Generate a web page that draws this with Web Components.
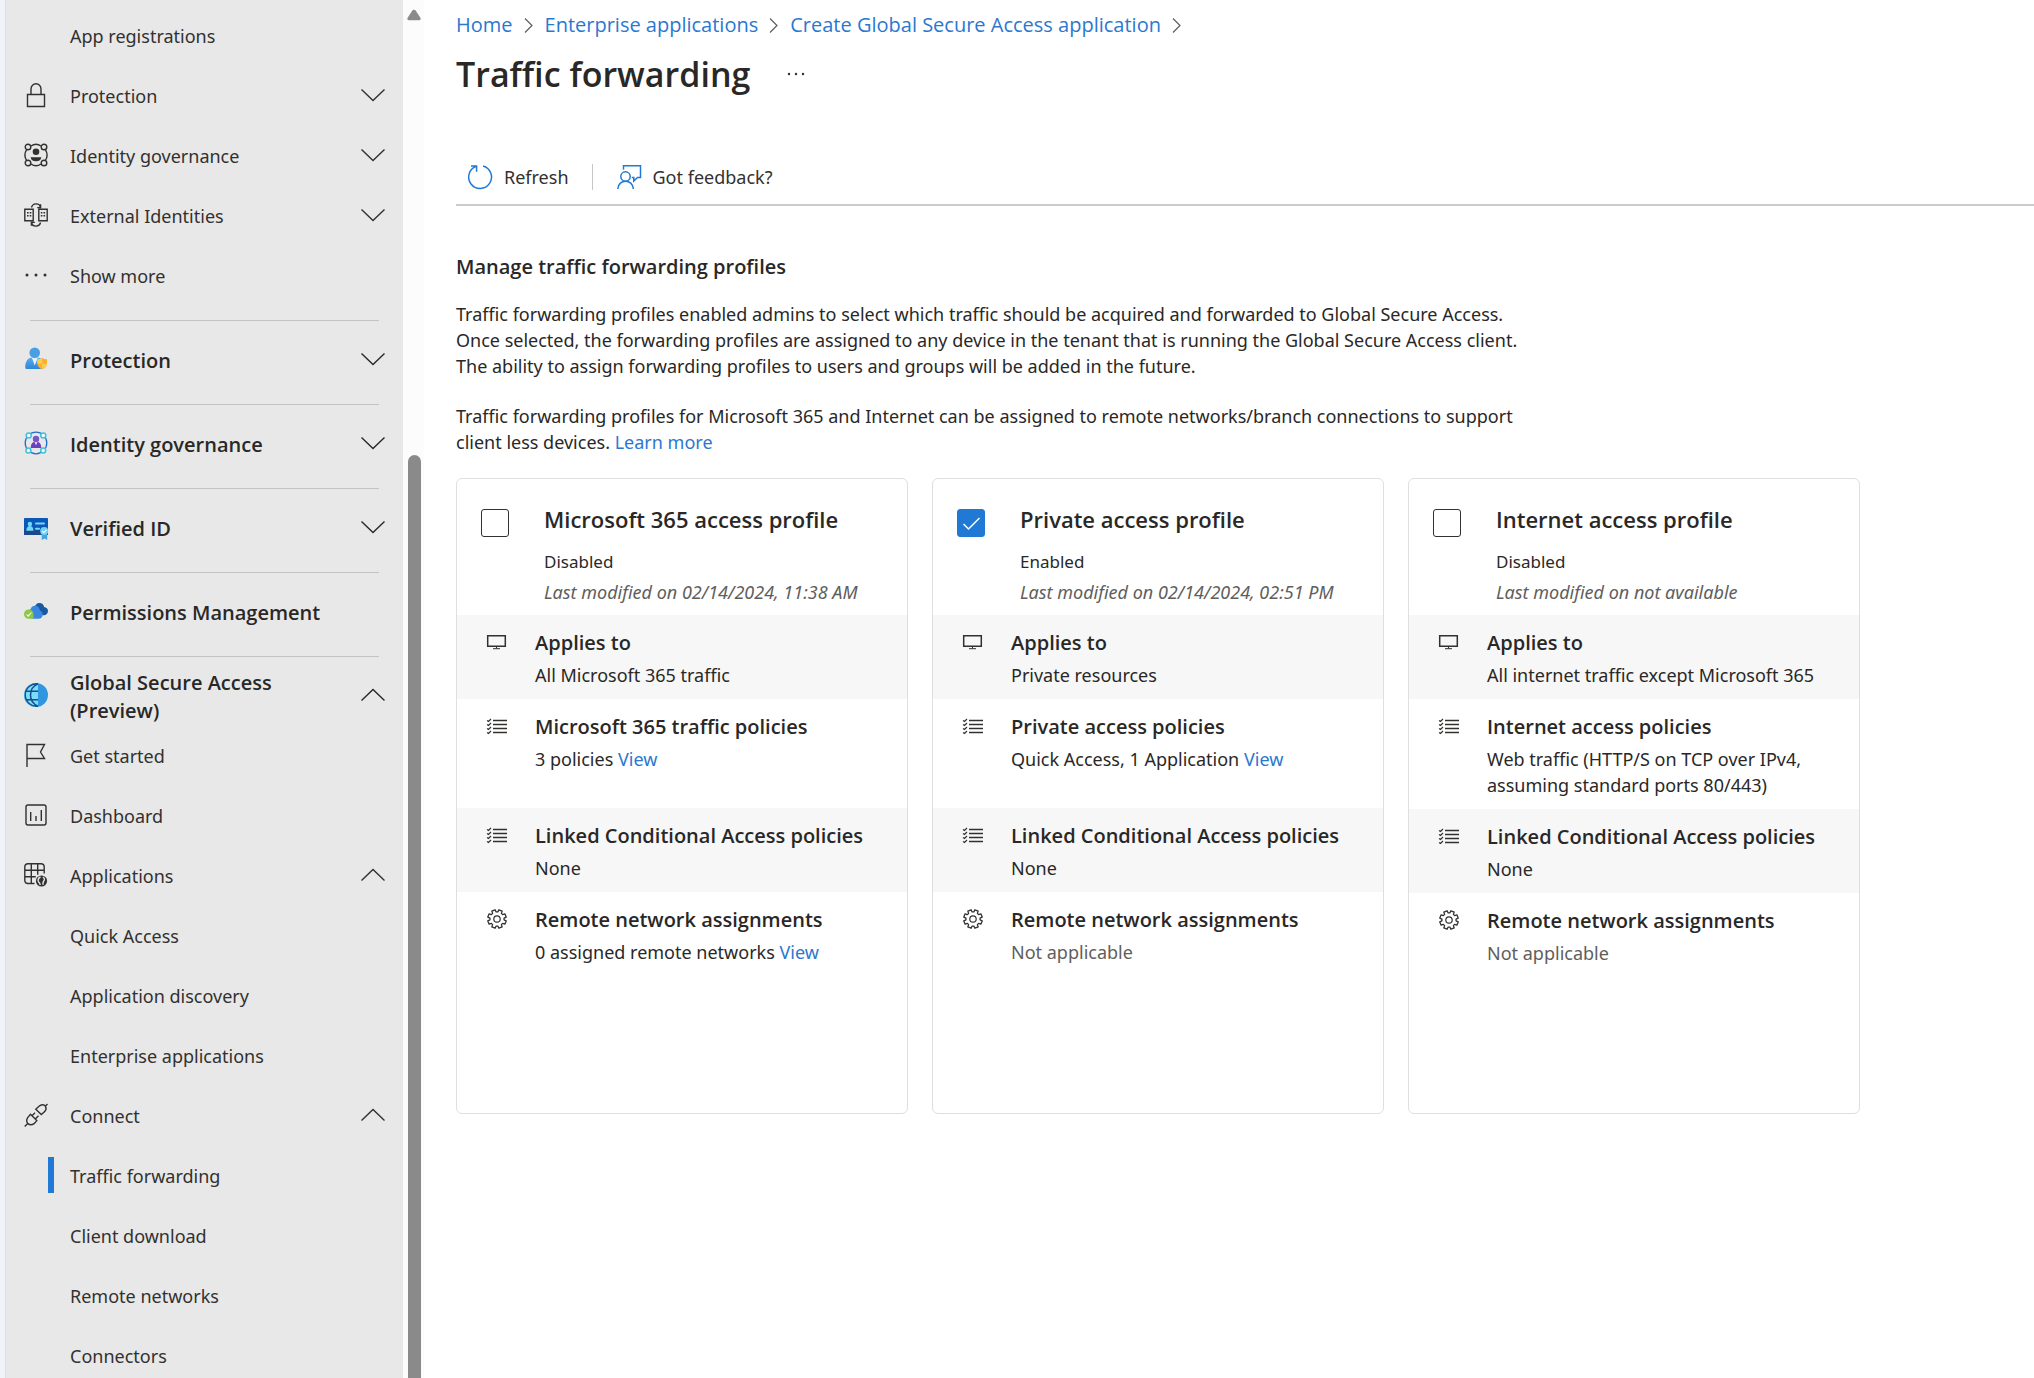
<!DOCTYPE html>
<html lang="en">
<head>
<meta charset="utf-8">
<title>Traffic forwarding</title>
<style>
  body { margin: 0; }
</style>
</head>
<body>
<entra-shell>
  <side-nav slot="nav">
    <nav-item>App registrations</nav-item>
    <nav-item icon="lock" toggle="down">Protection</nav-item>
    <nav-item icon="governance" toggle="down">Identity governance</nav-item>
    <nav-item icon="external" toggle="down">External Identities</nav-item>
    <nav-item icon="more">Show more</nav-item>
    <nav-rule></nav-rule>
    <nav-item strong icon="protection" toggle="down">Protection</nav-item>
    <nav-rule></nav-rule>
    <nav-item strong icon="identity" toggle="down">Identity governance</nav-item>
    <nav-rule></nav-rule>
    <nav-item strong icon="verified" toggle="down">Verified ID</nav-item>
    <nav-rule></nav-rule>
    <nav-item strong icon="permissions">Permissions Management</nav-item>
    <nav-rule></nav-rule>
    <nav-item strong icon="globe" toggle="up">Global Secure Access<br>(Preview)</nav-item>
    <nav-item icon="flag">Get started</nav-item>
    <nav-item icon="dashboard">Dashboard</nav-item>
    <nav-item icon="apps" toggle="up">Applications</nav-item>
    <nav-item>Quick Access</nav-item>
    <nav-item>Application discovery</nav-item>
    <nav-item>Enterprise applications</nav-item>
    <nav-item icon="connect" toggle="up">Connect</nav-item>
    <nav-item current>Traffic forwarding</nav-item>
    <nav-item>Client download</nav-item>
    <nav-item>Remote networks</nav-item>
    <nav-item>Connectors</nav-item>
  </side-nav>

  <page-header heading="Traffic forwarding">
    <crumb-link>Home</crumb-link>
    <crumb-link>Enterprise applications</crumb-link>
    <crumb-link>Create Global Secure Access application</crumb-link>
  </page-header>

  <command-bar>
    <command-button icon="refresh">Refresh</command-button>
    <command-button icon="feedback" divided>Got feedback?</command-button>
  </command-bar>

  <profile-intro></profile-intro>

  <profile-grid>
    <profile-card status="Disabled" modified="Last modified on 02/14/2024, 11:38 AM">
      <span slot="title">Microsoft 365 access profile</span>
      <profile-row icon="monitor" shaded><span slot="title">Applies to</span>All Microsoft 365 traffic</profile-row>
      <profile-row icon="list" tall link="View"><span slot="title">Microsoft 365 traffic policies</span>3 policies</profile-row>
      <profile-row icon="list" shaded><span slot="title">Linked Conditional Access policies</span>None</profile-row>
      <profile-row icon="gear" link="View"><span slot="title">Remote network assignments</span>0 assigned remote networks</profile-row>
    </profile-card>
    <profile-card checked status="Enabled" modified="Last modified on 02/14/2024, 02:51 PM">
      <span slot="title">Private access profile</span>
      <profile-row icon="monitor" shaded><span slot="title">Applies to</span>Private resources</profile-row>
      <profile-row icon="list" tall link="View"><span slot="title">Private access policies</span>Quick Access, 1 Application</profile-row>
      <profile-row icon="list" shaded><span slot="title">Linked Conditional Access policies</span>None</profile-row>
      <profile-row icon="gear" muted><span slot="title">Remote network assignments</span>Not applicable</profile-row>
    </profile-card>
    <profile-card status="Disabled" modified="Last modified on not available">
      <span slot="title">Internet access profile</span>
      <profile-row icon="monitor" shaded><span slot="title">Applies to</span>All internet traffic except Microsoft 365</profile-row>
      <profile-row icon="list" tall><span slot="title">Internet access policies</span>Web traffic (HTTP/S on TCP over IPv4, assuming standard ports 80/443)</profile-row>
      <profile-row icon="list" shaded><span slot="title">Linked Conditional Access policies</span>None</profile-row>
      <profile-row icon="gear" muted><span slot="title">Remote network assignments</span>Not applicable</profile-row>
    </profile-card>
  </profile-grid>
</entra-shell>

<script>
const gearPath = (() => {
  const teeth = 8, points = [];
  for (let i = 0; i < teeth; i++) {
    const a = i * 2 * Math.PI / teeth + Math.PI / 8;
    [[-0.27, 7.1], [-0.19, 9.4], [0.19, 9.4], [0.27, 7.1]].forEach(([d, r]) =>
      points.push((12 + r * Math.sin(a + d)).toFixed(2) + ' ' + (12 - r * Math.cos(a + d)).toFixed(2)));
  }
  return 'M' + points.join('L') + 'Z';
})();

const ICONS = {
  down: '<path d="M.5 6.500 12 17.500 23.500 6.500"/>',
  up: '<path d="M.5 17.500 12 6.500 23.500 17.500"/>',
  crumb: '<path d="M8 5.500 15 12.500 8 19.500" stroke-width="1.200"/>',
  more: '<g fill="currentColor" stroke="none"><circle cx="3" cy="12" r="1.500"/><circle cx="12" cy="12" r="1.500"/><circle cx="21" cy="12" r="1.500"/></g>',
  dots: '<g fill="currentColor" stroke="none"><circle cx="5" cy="12" r="1.200"/><circle cx="12" cy="12" r="1.200"/><circle cx="19" cy="12" r="1.200"/></g>',
  lock: '<path d="M3.500 11.500h17v12h-17zM7 11V6a5 5.200 0 0 1 10 0v5"/>',
  governance: '<circle cx="4" cy="4" r="2.800"/><circle cx="20" cy="4" r="2.800"/><circle cx="4" cy="20" r="2.800"/><circle cx="20" cy="20" r="2.800"/><path d="M7 3q5-3.500 10 0M7 21q5 3.500 10 0M2.500 6.800q-3.200 5.200 0 10.400M21.500 6.800q3.200 5.200 0 10.400"/><circle cx="12" cy="8.700" r="3.300" fill="currentColor" stroke="none"/><path d="M6.700 14.200h10.600q-.3 4-5.300 4t-5.300-4z" fill="currentColor" stroke="none"/>',
  external: '<path d="M.8 6.300h8.400v11.400H.8zM14.800 6.300h8.400v11.400h-8.400zM7.500 4.500C8.500-.2 15.500-.3 16.300 3.800M16.600 1.200v3.400h-3.400M16.500 19.500c-1 4.700-8 4.800-8.800.7M7.400 22.800v-3.400h3.400"/><path d="M3 9h1.600v1.600H3zM5.700 9h1.600v1.600H5.700zM3 12h1.600v1.600H3zM5.700 12h1.600v1.600H5.700zM16.800 9h1.600v1.600h-1.600zM19.500 9h1.600v1.600h-1.600zM16.800 12h1.600v1.600h-1.600zM19.500 12h1.600v1.600h-1.600z" fill="currentColor" stroke="none"/>',
  protection: '<defs><linearGradient id="p" x2="0" y2="1"><stop stop-color="#5aaae9"/><stop offset="1" stop-color="#2f86d9"/></linearGradient></defs><g stroke="none"><path d="M1.300 20.500C1 15 4 10.800 7 10.800h7.500c3 0 5.500 4 5.300 9.700 0 1-.7 1.500-1.500 1.500H3c-1 0-1.700-.5-1.700-1.500z" fill="url(#p)"/><path d="M7.800 10.800h6l-3 7.800z" fill="#e3f1fb"/><circle cx="10.700" cy="5.700" r="5.300" fill="#4a9fe4"/><path d="M18.200 10.700q1.600 1.500 4.800 1.600v4.200c0 3-2.500 4.900-4.800 6.100-2.300-1.200-4.800-3.100-4.800-6.100v-4.200q3.200-.1 4.800-1.600z" fill="#f9ae35"/><path d="M18.200 10.700v6H13.400v-4.400q3.200-.1 4.800-1.600zM18.200 16.700H23c-.2 2.800-2.600 4.700-4.800 5.900z" fill="#fdcc4a"/></g>',
  identity: '<g fill="none"><circle cx="12" cy="12" r="10.800" stroke="#2470cf" stroke-width="1.300"/><g fill="#f4fbfd" stroke="#41bfdb" stroke-width="1.500"><circle cx="4.700" cy="4.600" r="2.500"/><circle cx="19.300" cy="4.600" r="2.500"/><circle cx="4.400" cy="19.400" r="2.500"/><circle cx="19.200" cy="19.400" r="2.500"/></g></g><g fill="#7a55c8" stroke="none"><circle cx="12" cy="7.900" r="3.200"/><path d="M6.800 17c-.2-3.500 1.600-6 3.500-6h3.400c2 0 3.700 2.500 3.500 6z" fill="#6a43bb"/><path d="M10.500 11h3L12 14.500z" fill="#e2d6f7"/></g>',
  verified: '<g stroke="none"><path d="M0 3.700q0-.7.800-.7h22.400q.8 0 .8.700v15.600q0 .7-.8.700H.8q-.8 0-.8-.7z" fill="#0b57b8"/><path d="M0 14h24v5.300q0 .7-.8.700H.8q-.8 0-.8-.7z" fill="#1a4a8d"/><g fill="#72d8fa"><circle cx="5.900" cy="9" r="2.200"/><path d="M2.300 15.800c0-3 1.500-4.900 3.600-4.900s3.600 1.900 3.600 4.900z"/><rect x="11" y="7.500" width="10" height="2" rx="1"/><rect x="11" y="12.700" width="5" height="2" rx="1"/></g><path d="M17.700 17h5.500v8l-2.700-1.500-2.800 1.500z" fill="#3fa5e3"/><circle cx="20.200" cy="16" r="4" fill="#6fd0f7"/></g><path d="m18.300 16.200 1.500 1.500 2.600-2.900" stroke="#fff" stroke-width="1.200"/>',
  permissions: '<g stroke="none"><path d="M10.500 9c.4-3 2.200-5 5-5 2.500 0 4.200 1.500 4.600 3.900 2.300.2 3.900 1.800 3.900 4 0 2.400-1.900 4.300-4.300 4.300H13z" fill="#185a9d"/><path d="M5 13c0-1.800.7-2.800 1.700-3C7.300 7.900 9 6.800 11 6.800c2.800 0 4.600 2 4.800 4.700 1.700.4 2.900 1.900 2.900 3.900 0 2.500-1.800 4.400-4.200 4.400H8z" fill="#3b86e0"/><path d="M0 15.200C0 12.500 2 10.500 4.800 10.500s4.700 2 4.700 4.700v4.600H4.800C2 19.800 0 17.900 0 15.200z" fill="#8cc847"/></g><path d="m2.600 15.500 1.500 1.700 3.300-3.700" stroke="#fff" stroke-width="1.100"/>',
  globe: '<circle cx="12" cy="12" r="12" fill="#2f97e0" stroke="none"/><path d="M14 .2a12 12 0 1 0 0 23.600z" fill="#7adcf8" stroke="none"/><path d="M14 .9Q6.500 4 6.500 12T14 23.100M1.600 8.200H14M1.600 16.800H14M14 .8a11.300 11.300 0 1 0 0 22.400" stroke="#174f8c" stroke-width="1.500"/>',
  flag: '<path d="M3 24V1.500h17.500L16.500 9l4 6.500H3"/>',
  dashboard: '<rect x="2" y="2" width="20" height="20" rx="2"/><path d="M6.700 9v9M12 13v5M17.300 7v11"/>',
  apps: '<path d="M10.500 20.500H4Q.8 20.500.8 17.300V4Q.8.800 4 .8h13q3.200 0 3.200 3.200v6.500M7.300.8v19.700M13.700.8v11M.8 7.300h19.400M.8 13.800h11"/><circle cx="17.500" cy="18" r="5.600" fill="currentColor" stroke="none"/><path d="M16.500 14c-2.500 1.200-2.800 3-2 4.800q1.500.8 1.700 3.200M18.800 14c2.300 1.300 1.800 3 .8 4.300-.8 1-.6 2-.6 3.400" stroke="#e8e8e8" stroke-width="1.400"/>',
  connect: '<path d="M11.800 6.300 15.500 2.800q4-2.500 6 .5 1.500 2.500-.8 5.300l-3.400 3zM21 3.500 23.500 1M6.500 11.300l6.300 6.300-2.700 3q-3.500 2.300-6.200 0-2.300-2.800-.2-6zM3.500 20.700.7 23.500M8 12.800l3-3M11.300 16l3.200-3.200" stroke-width="1.400"/>',
  refresh: '<path d="M15 1A11.400 11.400 0 1 1 8.500 1.200M3 .9h5.600v5.800" stroke-width="1.500"/>',
  feedback: '<path d="M6.500 4.500V.8h17v11.700h-3l-3.700 3.500v-3.500h-2" stroke-width="1.500"/><circle cx="8.500" cy="11.500" r="4.700" stroke-width="1.500"/><path d="M.8 24c.5-10.500 15-10.500 15.600 0" stroke-width="1.500"/>',
  monitor: '<path d="M2.700 5.700h17.600v10.600H2.700z" stroke-width="1.500"/><path d="M11.500 16.500v2M8 18.700h7" stroke-width="1"/>',
  list: '<path d="M8 6.500h14M8 10.500h14M8 14.500h14M8 18.500h14" stroke-width="1.400"/><path d="m2 6.500 1.500 1 2.500-2.500M2 10.500l1.500 1L6 9M2 14.500l1.500 1L6 13M2 18.500l1.500 1L6 17" stroke-width="1.200"/>',
  gear: `<path d="${gearPath}" stroke-width="1.300" stroke-linejoin="round"/><circle cx="12" cy="12" r="3.200" stroke-width="1.200"/>`
};

const define = (name, html) => customElements.define(name, class extends HTMLElement {
  connectedCallback() {
    if (this.shadowRoot) return;
    const root = this.attachShadow({ mode: 'open' });
    root.innerHTML = typeof html === 'function' ? html(this) : html;
  }
});

define('ui-icon', el => `
  <style>
    :host { display: block; flex: none; width: 24px; height: 24px; }
    svg { display: block; overflow: visible; fill: none; stroke: currentColor; stroke-width: 1.4; }
  </style>
  <svg width="24" height="24" viewBox="0 0 24 24" aria-hidden="true">${ICONS[el.getAttribute('name')] || ''}</svg>`);

define('entra-shell', `
  <style>
    :host { display: flex; height: 100vh; overflow: hidden; background: #fff; color: #292827;
            --strong: "Open Sans", "Noto Sans", sans-serif;
            font: 18px/26px "Noto Sans", "Open Sans", sans-serif; }
    .edge { flex: none; width: 5px; background: #f1f3f9; border-right: 1px solid #dcdfe5; }
    main { flex: 1; min-width: 0; padding-left: 32px; }
  </style>
  <div class="edge"></div>
  <slot name="nav"></slot>
  <main><slot></slot></main>`);

define('side-nav', `
  <style>
    :host { display: flex; flex: none; }
    nav { width: 397px; box-sizing: border-box; padding-top: 5px; background: #e8e8e8; overflow: hidden; }
    .track { width: 21px; box-sizing: border-box; padding-right: 3px; display: flex; flex-direction: column;
             align-items: flex-end; background: #fcfcfc; }
    svg { display: block; margin-top: 9px; fill: #8a8a8a; }
    .thumb { flex: 1; width: 13px; margin-top: 434px; border-radius: 7px 7px 0 0; background: #8a8a8a; }
  </style>
  <nav aria-label="Main"><slot></slot></nav>
  <div class="track">
    <svg width="14" height="12" viewBox="0 0 14 12"><path d="M5.500 1.300Q7 0 8.500 1.300L13.500 9q.7 2-1.200 2.200H1.700Q-.2 11 .5 9z"/></svg>
    <div class="thumb"></div>
  </div>`);

define('nav-rule', `
  <style>
    :host { display: block; padding: 15px 24px 8px; }
    hr { margin: 0; border: 0; height: 1px; background: #c3c3c3; }
  </style><hr>`);

define('nav-item', el => {
  const toggle = el.getAttribute('toggle');
  const tag = toggle ? 'button' : 'a';
  const attrs = toggle ? `type="button" aria-expanded="${toggle === 'up'}"` : 'href="#"';
  return `
  <style>
    :host { display: block; }
    .row { display: flex; align-items: center; width: 100%; height: 60px; box-sizing: border-box; margin: 0;
           padding: 0 18px; border: 0; background: none; color: #323130; font: inherit; line-height: 28px;
           text-align: left; text-decoration: none; cursor: pointer; }
    .label { flex: 1; margin-left: 22px; padding-top: 2px; white-space: nowrap; }
    .mark { display: flex; justify-content: flex-end; flex: none; width: 30px; margin-right: -6px; }
    .mark::before { content: ""; width: 6px; height: 36px; }
    :host([current]) .mark::before { background: #2079d4; }
    :host([strong]) .row { font-family: var(--strong); font-size: 20px; font-weight: 600; color: #292827; }
    :host([strong]) .label { padding-top: 4px; }
  </style>
  <${tag} class="row" ${attrs}>
    ${el.hasAttribute('current') ? '<span class="mark"></span>' : `<ui-icon name="${el.getAttribute('icon') || ''}"></ui-icon>`}
    <span class="label"><slot></slot></span>
    ${toggle ? `<ui-icon name="${toggle}"></ui-icon>` : ''}
  </${tag}>`;
});

define('crumb-link', `
  <style>
    :host { display: flex; align-items: center; font-family: var(--strong); font-size: 20px; }
    a { color: #2a78d0; text-decoration: none; white-space: nowrap; }
    ui-icon { margin: 0 4px; color: #605e5c; }
  </style>
  <a href="#"><slot></slot></a><ui-icon name="crumb"></ui-icon>`);

define('page-header', el => `
  <style>
    :host { display: block; padding-top: 12px; }
    nav { display: flex; }
    .title { display: flex; align-items: center; gap: 34px; margin-top: 11px; }
    h1 { margin: 0; font: 600 34px/50px var(--strong); }
    button { display: flex; padding: 0; border: 0; background: none; color: #323130; }
  </style>
  <nav aria-label="Breadcrumb"><slot></slot></nav>
  <div class="title"><h1>${el.getAttribute('heading')}</h1>
  <button type="button" aria-label="More options"><ui-icon name="dots"></ui-icon></button></div>`);

define('command-bar', `
  <style>
    :host { display: flex; margin-top: 55px; padding: 10px 0 14px 12px; border-bottom: 2px solid #cbcbcb; }
  </style><slot></slot>`);

define('command-button', el => `
  <style>
    :host { display: flex; }
    :host([divided]) { margin-left: 23px; padding-left: 24px; border-left: 1px solid #c8c6c4; }
    button { display: flex; align-items: center; gap: 12px; padding: 0; border: 0; background: none;
             color: #323130; font: inherit; line-height: 26px; }
    ui-icon { color: #2079d4; }
  </style>
  <button type="button"><ui-icon name="${el.getAttribute('icon')}"></ui-icon><slot></slot></button>`);

define('profile-intro', `
  <style>
    :host { display: block; max-width: 1120px; padding: 48px 0 23px; }
    h2 { margin: 0 0 21px; font: 600 20px/26px var(--strong); }
    p { margin: 0; }
    p + p { margin-top: 24px; }
    a { color: #2a78d0; text-decoration: none; }
  </style>
  <h2>Manage traffic forwarding profiles</h2>
  <p>Traffic forwarding profiles enabled admins to select which traffic should be acquired and forwarded to Global Secure Access.<br>Once selected, the forwarding profiles are assigned to any device in the tenant that is running the Global Secure Access client.<br>The ability to assign forwarding profiles to users and groups will be added in the future.</p>
  <p>Traffic forwarding profiles for Microsoft 365 and Internet can be assigned to remote networks/branch connections to support<br>client less devices. <a href="#">Learn more</a></p>`);

define('profile-grid', `
  <style>
    :host { display: grid; grid-template-columns: repeat(3, minmax(0, 1fr)); gap: 24px; max-width: 1404px; }
  </style><slot></slot>`);

define('profile-card', el => `
  <style>
    :host { display: block; min-height: 634px; border: 1px solid #dfdfdf; border-radius: 6px; }
    header { display: flex; gap: 35px; padding: 24px 24px 8px; }
    .box { display: grid; align-self: flex-start; margin-top: 6px; }
    .box > * { grid-area: 1 / 1; }
    input { appearance: none; width: 28px; height: 28px; margin: 0; box-sizing: border-box;
            border: 1px solid #323130; border-radius: 3px; background: #fff; }
    .box svg { display: none; fill: none; stroke: #fff; stroke-width: 1.5; pointer-events: none; z-index: 1; }
    input:checked { background: #2079d4; border-color: #2079d4; }
    input:checked + svg { display: block; }
    label { display: block; font: 600 22px/32px var(--strong); white-space: nowrap; }
    p { margin: 0; font-size: 17px; line-height: 30px; white-space: nowrap; }
    .status { margin-top: 12px; }
    .modified { color: #605e5c; font-size: 18px; font-style: italic; }
  </style>
  <header>
    <div class="box"><input type="checkbox" id="enabled" ${el.hasAttribute('checked') ? 'checked' : ''}>
      <svg width="28" height="28" viewBox="0 0 28 28"><path d="m6.500 15 5 5L22.500 9"/></svg></div>
    <div>
      <label for="enabled"><slot name="title"></slot></label>
      <p class="status">${el.getAttribute('status')}</p>
      <p class="modified">${el.getAttribute('modified')}</p>
    </div>
  </header>
  <slot></slot>`);

define('profile-row', el => `
  <style>
    :host { display: flex; min-height: 84px; box-sizing: border-box; padding: 14px 20px 11px 28px; }
    :host([shaded]) { background: #f7f7f7; }
    :host([tall]) { min-height: 109px; }
    ui-icon { margin: 1px 26px 0 0; color: #323130; }
    h3 { margin: 0 0 5px; font: 600 20px/28px var(--strong); white-space: nowrap; }
    p { margin: 0; }
    :host([muted]) p { color: #605e5c; }
    a { color: #2a78d0; text-decoration: none; }
  </style>
  <ui-icon name="${el.getAttribute('icon')}"></ui-icon>
  <div><h3><slot name="title"></slot></h3>
  <p><slot></slot>${el.hasAttribute('link') ? ` <a href="#">${el.getAttribute('link')}</a>` : ''}</p></div>`);
</script>
</body>
</html>
